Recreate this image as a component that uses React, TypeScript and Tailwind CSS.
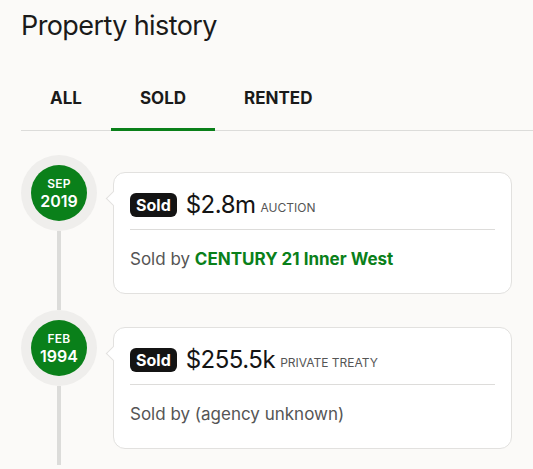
import React from 'react';

type Sale = {
  month: string;
  year: string;
  price: string;
  method: string;
  agency?: string;
};

const sales: Sale[] = [
  { month: 'SEP', year: '2019', price: '$2.8m', method: 'AUCTION', agency: 'CENTURY 21 Inner West' },
  { month: 'FEB', year: '1994', price: '$255.5k', method: 'PRIVATE TREATY' },
];

const tabs = ['ALL', 'SOLD', 'RENTED'];

const TimelineItem: React.FC<{ sale: Sale }> = ({ sale }) => (
  <div className="flex">
    <div className="flex flex-col items-center w-[76px] shrink-0">
      <div className="w-[76px] h-[76px] rounded-full bg-[#efeeec] flex items-center justify-center">
        <div className="w-[56px] h-[56px] rounded-full bg-[#0a801a] flex flex-col items-center justify-center text-white font-semibold leading-none">
          <span className="text-[12px] tracking-wide">{sale.month}</span>
          <span className="text-[16px] mt-[3px]">{sale.year}</span>
        </div>
      </div>
      <div className="w-1 flex-1 bg-[#dcdcda]" />
    </div>
    <div className="flex-1 ml-4 mt-[17px] mb-4 mr-[21px]">
      <div className="relative bg-white border border-[#e2e1df] rounded-xl px-4 pt-[16px] pb-[22px]">
        <div className="absolute -left-[6px] top-[20px] w-[11px] h-[11px] bg-white border-l border-b border-[#e2e1df] rotate-45" />
        <div className="flex items-center h-8">
          <span className="bg-[#141414] text-white font-bold text-[16px] rounded-md h-6 px-[6px] flex items-center">Sold</span>
          <span className="ml-[9px] text-[24px] text-[#141414] tracking-[-0.5px]">{sale.price}</span>
          <span className="ml-[5px] mt-[6px] text-[12px] text-[#555]">{sale.method}</span>
        </div>
        <div className="h-px bg-[#dddcda] mt-2" />
        <p className="mt-[17px] text-[17px] leading-6 text-[#555]">
          Sold by{' '}
          {sale.agency ? (
            <span className="font-bold text-[#0a801a]">{sale.agency}</span>
          ) : (
            '(agency unknown)'
          )}
        </p>
      </div>
    </div>
  </div>
);

const App: React.FC = () => {
  return (
    <div className="w-[533px] h-[469px] overflow-hidden bg-[#fbfaf8] font-['Inter',sans-serif] pl-[21px]">
      <h1 className="mt-2 text-[27px] leading-9 text-[#1a1a1a] tracking-[-0.6px]">Property history</h1>
      <div className="mt-[39px] flex border-b border-[#dcdcda]">
        {tabs.map((tab) => (
          <div
            key={tab}
            className={`h-12 pb-[14px] px-[29px] flex items-center text-[17px] font-bold text-[#1a1a1a] border-b-[3px] -mb-px ${
              tab === 'SOLD' ? 'border-[#0a801a]' : 'border-transparent'
            }`}
          >
            {tab}
          </div>
        ))}
      </div>
      <div className="mt-6">
        {sales.map((sale) => (
          <TimelineItem key={sale.year} sale={sale} />
        ))}
      </div>
    </div>
  );
};

export default App;
